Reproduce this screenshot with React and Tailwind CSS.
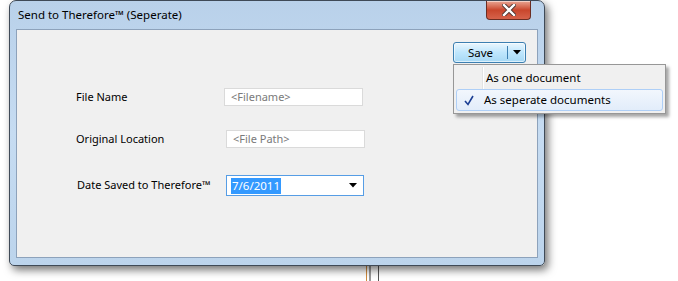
import { useState } from "react";

function CloseButton() {
  return (
    <div className="absolute right-[7px] top-0 flex h-[19px] w-[45px] items-center justify-center rounded-b-[4px] border border-t-0 border-[#6b2d22] bg-gradient-to-b from-[#e8a593] via-[#c9462c] to-[#d6624a] shadow-[inset_0_1px_0_rgba(255,255,255,0.5)]">
      <svg width="14" height="12" viewBox="0 0 14 12">
        <path
          d="M2 1 L12 11 M12 1 L2 11"
          stroke="#4a3430"
          strokeWidth="4.2"
          strokeLinecap="square"
        />
        <path
          d="M2 1 L12 11 M12 1 L2 11"
          stroke="#ffffff"
          strokeWidth="2.4"
          strokeLinecap="square"
        />
      </svg>
    </div>
  );
}

function SaveButton() {
  return (
    <div className="flex h-[21px] w-[73px] items-stretch rounded-[3px] border border-[#3c7fb1] bg-gradient-to-b from-[#eaf6fd] via-[#bee6fd] to-[#a7d9f5] shadow-[inset_0_0_0_1px_rgba(255,255,255,0.6)]">
      <div className="flex flex-1 items-center justify-center text-[11.5px] text-black">
        Save
      </div>
      <div className="my-[3px] w-px bg-[#3c7fb1]" />
      <div className="flex w-[17px] items-center justify-center">
        <svg width="8" height="5" viewBox="0 0 8 5">
          <path d="M0 0 L8 0 L4 4.5 Z" fill="#000" />
        </svg>
      </div>
    </div>
  );
}

function TextField({ placeholder, className = "" }) {
  return (
    <div
      className={`flex h-[18px] w-[139px] items-center border border-[#dadada] bg-white pl-[6px] text-[11px] text-[#7a7a7a] ${className}`}
    >
      {placeholder}
    </div>
  );
}

function DateCombo({ value }) {
  return (
    <div className="flex h-[21px] w-[138px] items-center border border-[#569de5] bg-white pl-[4px] pr-[6px]">
      <span className="bg-[#3399ff] px-px text-[11.5px] leading-[16px] text-white">
        {value}
      </span>
      <div className="flex-1" />
      <svg width="8" height="5" viewBox="0 0 8 5">
        <path d="M0 0 L8 0 L4 4.5 Z" fill="#000" />
      </svg>
    </div>
  );
}

function SaveMenu() {
  return (
    <div className="absolute left-[453px] top-[64px] h-[50px] w-[213px] border border-[#979797] bg-[#f0f0f0] p-[2px] shadow-[3px_3px_3px_rgba(0,0,0,0.35)]">
      <div className="absolute bottom-[2px] left-[28px] top-[2px] w-px bg-[#e2e3e3]" />
      <div className="absolute bottom-[2px] left-[29px] top-[2px] w-px bg-white" />
      <div className="relative flex h-[22px] items-center pl-[30px] text-[11.5px] text-black">
        As one document
      </div>
      <div className="relative flex h-[22px] items-center rounded-[3px] border border-[#aecff7] bg-gradient-to-b from-[#f2f7fd] to-[#e2edfa] text-[11.5px] text-black">
        <div className="flex w-[24px] items-center justify-center">
          <svg width="10" height="11" viewBox="0 0 10 11">
            <path
              d="M1 6 L4 9.5 L9 1"
              fill="none"
              stroke="#1c3f94"
              strokeWidth="1.6"
            />
          </svg>
        </div>
        <span className="pl-[3px]">As seperate documents</span>
      </div>
    </div>
  );
}

export default function App() {
  const [date] = useState("7/6/2011");

  return (
    <div
      className="relative h-[281px] w-[678px] overflow-hidden bg-white"
      style={{ fontFamily: '"Noto Sans", "Open Sans", sans-serif' }}
    >
      {/* something behind the dialog */}
      <div className="absolute left-[366px] top-[255px] h-[26px] w-px bg-[#d08a3c]" />
      <div className="absolute left-[369px] top-[255px] h-[26px] w-[2px] bg-[#9a9a9a]" />
      <div className="absolute left-[378px] top-[255px] h-[26px] w-px bg-[#555]" />

      <div className="absolute left-[9px] top-0 flex h-[266px] w-[536px] flex-col rounded-t-[7px] rounded-b-[5px] border border-[#3f4a57] bg-gradient-to-b from-[#b9d1ea] via-[#c6dcf2] to-[#bcd4ec] px-[6px] pb-[7px] shadow-[3px_4px_9px_rgba(0,0,0,0.55)]">
        <div className="relative flex h-[28px] shrink-0 items-center pl-[2px] text-[11.5px] text-black">
          Send to Therefore™ (Seperate)
          <CloseButton />
        </div>
        <div className="flex flex-1 flex-col border border-[#8da2bb] bg-[#f0f0f0]">
          <div className="flex justify-end pr-[11px] pt-[12px]">
            <SaveButton />
          </div>
          <div className="flex flex-col pl-[59px] pt-[25px] text-[11px] text-black">
            <div className="flex items-center">
              <div className="w-[148px]">File Name</div>
              <TextField placeholder="<Filename>" />
            </div>
            <div className="mt-[24px] flex items-center">
              <div className="w-[150px]">Original Location</div>
              <TextField placeholder="<File Path>" className="w-[138px]" />
            </div>
            <div className="mt-[27px] flex items-center">
              <div className="w-[150px] pl-[1px]">Date Saved to Therefore™</div>
              <DateCombo value={date} />
            </div>
          </div>
        </div>
      </div>

      <SaveMenu />
    </div>
  );
}
